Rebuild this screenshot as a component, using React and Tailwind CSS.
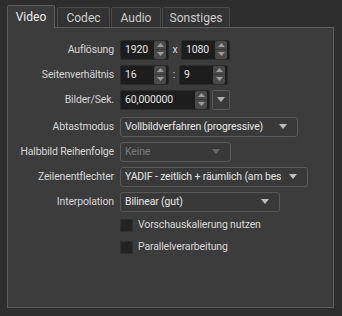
import React from 'react'

const font = { fontFamily: 'Roboto, "Noto Sans", sans-serif' }

function Arrows() {
    return (
        <div className="flex flex-col w-[12px] h-[18px] my-auto mr-[2px] rounded-[2px] bg-[#4a4a4a] overflow-hidden">
            <div className="flex-1 flex items-center justify-center border-b border-[#3a3a3a]">
                <svg width="7" height="4" viewBox="0 0 7 4"><path d="M0 4 L3.5 0 L7 4 Z" fill="#9c9c9c" /></svg>
            </div>
            <div className="flex-1 flex items-center justify-center">
                <svg width="7" height="4" viewBox="0 0 7 4"><path d="M0 0 L3.5 4 L7 0 Z" fill="#9c9c9c" /></svg>
            </div>
        </div>
    )
}

function Spin({ value, width }) {
    return (
        <div className={`flex h-[20px] ${width} bg-[#1d1d1d] border border-[#2b2b2b] rounded-[2px]`}>
            <span className="flex-1 pl-[4px] leading-[18px] text-[#e6e6e6]">{value}</span>
            <Arrows />
        </div>
    )
}

function Caret({ color = '#bdbdbd' }) {
    return <svg width="8" height="5" viewBox="0 0 8 5"><path d="M0 0 L8 0 L4 5 Z" fill={color} /></svg>
}

function Combo({ value, width, disabled }) {
    return (
        <div className={`flex items-center h-[20px] ${width} bg-[#393939] border border-[#5a5a5a] rounded-[3px] pl-[4px] pr-[10px]`}>
            <span className={`flex-1 min-w-0 mr-[8px] overflow-hidden whitespace-nowrap ${disabled ? 'text-[#7b7b7b]' : 'text-[#e6e6e6]'}`}>{value}</span>
            <Caret color={disabled ? '#6a6a6a' : '#bdbdbd'} />
        </div>
    )
}

function Row({ label, children, className = '' }) {
    return (
        <div className={`flex items-center h-[25px] ${className}`}>
            <div className="w-[106px] shrink-0 pr-[6px] text-right text-[#d6d6d6] whitespace-nowrap">{label}</div>
            <div className="flex items-center">{children}</div>
        </div>
    )
}

function Check({ label }) {
    return (
        <div className="flex items-center h-[22px] pl-[106px]">
            <div className="w-[13px] h-[13px] bg-[#232323] border border-[#2f2f2f]" />
            <span className="ml-[5px] text-[#d6d6d6]">{label}</span>
        </div>
    )
}

export default function App() {
    const tabs = [
        { name: 'Video', w: 'w-[48px]' },
        { name: 'Codec', w: 'w-[53px]' },
        { name: 'Audio', w: 'w-[50px]' },
        { name: 'Sonstiges', w: 'w-[68px]' },
    ]
    return (
        <div className="w-[342px] h-[316px] bg-[#2e2e2e] pt-[5px] px-[7px] text-[10.5px] tracking-[-0.15px]" style={font}>
            <div className="flex items-end h-[22px] gap-[1px] tracking-normal">
                {tabs.map((t, i) => (
                    <div
                        key={t.name}
                        className={i === 0
                            ? `${t.w} h-[23px] -mb-[1px] relative z-10 bg-[#3c3c3c] border border-b-0 border-[#5e5e5e] rounded-t-[2px] flex items-center justify-center text-[#ececec] text-[12px]`
                            : `${t.w} h-[20px] bg-[#333333] border border-b-0 border-[#4a4a4a] rounded-t-[2px] flex items-center justify-center text-[#cfcfcf] text-[12px] ${i === 1 ? 'ml-[1px]' : ''}`}
                    >
                        {t.name}
                    </div>
                ))}
            </div>
            <div className="h-[281px] w-[327px] bg-[#3c3c3c] border border-[#5e5e5e] pt-[9px] pl-[6px]">
                <Row label="Auflösung">
                    <Spin value="1920" width="w-[49px]" />
                    <span className="w-[12px] text-center text-[#d6d6d6]">x</span>
                    <Spin value="1080" width="w-[49px]" />
                </Row>
                <Row label="Seitenverhältnis">
                    <Spin value="16" width="w-[49px]" />
                    <span className="w-[10px] text-center text-[#d6d6d6]">:</span>
                    <Spin value="9" width="w-[49px]" />
                </Row>
                <Row label="Bilder/Sek.">
                    <Spin value="60,000000" width="w-[90px]" />
                    <div className="ml-[2px] w-[18px] h-[20px] bg-[#3a3a3a] border border-[#585858] rounded-[2px] flex items-center justify-center">
                        <Caret color="#b0b0b0" />
                    </div>
                </Row>
                <Row label="Abtastmodus" className="mt-[2px]">
                    <Combo value="Vollbildverfahren (progressive)" width="w-[178px]" />
                </Row>
                <Row label="Halbbild Reihenfolge">
                    <Combo value="Keine" width="w-[111px]" disabled />
                </Row>
                <Row label="Zeilenentflechter">
                    <Combo value="YADIF - zeitlich + räumlich (am besten)" width="w-[188px]" />
                </Row>
                <Row label="Interpolation">
                    <Combo value="Bilinear (gut)" width="w-[160px]" />
                </Row>
                <Check label="Vorschauskalierung nutzen" />
                <Check label="Parallelverarbeitung" />
            </div>
        </div>
    )
}
